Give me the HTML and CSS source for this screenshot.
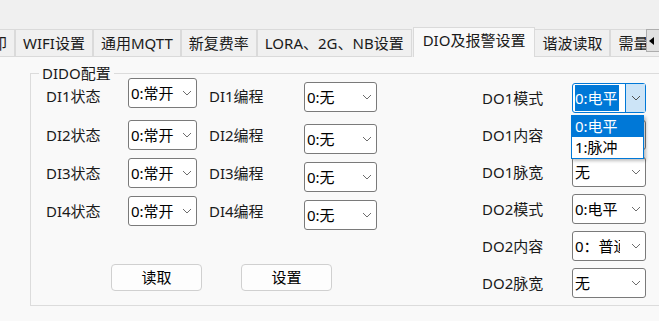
FILE: index.html
```html
<!DOCTYPE html>
<html lang="zh-CN">
<head>
    <meta charset="UTF-8">
    <title>DIO及报警设置</title>
    <link rel="stylesheet" href="styles.css">
</head>
<body>
<div class="tabs">
    <div class="tab">打印</div>
    <div class="tab">WIFI设置</div>
    <div class="tab">通用MQTT</div>
    <div class="tab">新复费率</div>
    <div class="tab">LORA、2G、NB设置</div>
    <div class="tab on">DIO及报警设置</div>
    <div class="tab">谐波读取</div>
    <div class="tab">需量设置</div>
    <div class="scroll"><i></i></div>
</div>
<div class="panel">
    <fieldset class="group">
        <legend>DIDO配置</legend>
        <div class="group-body">
            <!--左边：DI状态和编程-->
            <div class="left">
                <div class="di-grid">
                    <div class="lbl first">DI1状态</div>
                    <div class="combo w69"><span class="val">0:常开</span><span class="arrow"><svg width="10" height="6"><path d="M1 1 L5 5 L9 1"/></svg></span></div>
                    <div class="lbl lbl2 first">DI1编程</div>
                    <div class="combo w73 low"><span class="val">0:无</span><span class="arrow"><svg width="10" height="6"><path d="M1 1 L5 5 L9 1"/></svg></span></div>

                    <div class="lbl">DI2状态</div>
                    <div class="combo w69"><span class="val">0:常开</span><span class="arrow"><svg width="10" height="6"><path d="M1 1 L5 5 L9 1"/></svg></span></div>
                    <div class="lbl lbl2">DI2编程</div>
                    <div class="combo w73 low"><span class="val">0:无</span><span class="arrow"><svg width="10" height="6"><path d="M1 1 L5 5 L9 1"/></svg></span></div>

                    <div class="lbl">DI3状态</div>
                    <div class="combo w69"><span class="val">0:常开</span><span class="arrow"><svg width="10" height="6"><path d="M1 1 L5 5 L9 1"/></svg></span></div>
                    <div class="lbl lbl2">DI3编程</div>
                    <div class="combo w73 low"><span class="val">0:无</span><span class="arrow"><svg width="10" height="6"><path d="M1 1 L5 5 L9 1"/></svg></span></div>

                    <div class="lbl">DI4状态</div>
                    <div class="combo w69"><span class="val">0:常开</span><span class="arrow"><svg width="10" height="6"><path d="M1 1 L5 5 L9 1"/></svg></span></div>
                    <div class="lbl lbl2">DI4编程</div>
                    <div class="combo w73 low"><span class="val">0:无</span><span class="arrow"><svg width="10" height="6"><path d="M1 1 L5 5 L9 1"/></svg></span></div>
                </div>
                <div class="btns">
                    <button class="btn">读取</button>
                    <button class="btn">设置</button>
                </div>
            </div>
            <!--右边：DO设置-->
            <div class="right">
                <div class="lbl">DO1模式</div>
                <div class="combo w74 focus">
                    <span class="val"><span class="sel">0:电平</span></span>
                    <span class="arrow"><svg width="10" height="6"><path d="M1 1 L5 5 L9 1"/></svg></span>
                    <ul class="drop">
                        <li class="hot">0:电平</li>
                        <li>1:脉冲</li>
                    </ul>
                </div>
                <div class="lbl">DO1内容</div>
                <div class="combo w74"><span class="val">0：普通</span><span class="arrow"><svg width="10" height="6"><path d="M1 1 L5 5 L9 1"/></svg></span></div>
                <div class="lbl">DO1脉宽</div>
                <div class="combo w74"><span class="val">无</span><span class="arrow"><svg width="10" height="6"><path d="M1 1 L5 5 L9 1"/></svg></span></div>
                <div class="lbl">DO2模式</div>
                <div class="combo w74"><span class="val">0:电平</span><span class="arrow"><svg width="10" height="6"><path d="M1 1 L5 5 L9 1"/></svg></span></div>
                <div class="lbl">DO2内容</div>
                <div class="combo w74"><span class="val">0：普通</span><span class="arrow"><svg width="10" height="6"><path d="M1 1 L5 5 L9 1"/></svg></span></div>
                <div class="lbl">DO2脉宽</div>
                <div class="combo w74"><span class="val">无</span><span class="arrow"><svg width="10" height="6"><path d="M1 1 L5 5 L9 1"/></svg></span></div>
            </div>
        </div>
    </fieldset>
</div>
</body>
</html>
```

FILE: styles.css
```css
html,body{
    margin: 0;
    height: 100%;
    overflow: hidden;
}
body{
    background: #f0f0f0;
    font-family: "Noto Sans", "Noto Sans CJK SC", sans-serif;
    font-size: 15px;
    color: #1a1a1a;
}
/*顶部标签页*/
.tabs{
    display: flex;
    align-items: flex-end;
    height: 57px;
    margin-left: -31px;
    position: relative;
}
.tab{
    flex-shrink: 0;
    box-sizing: border-box;
    height: 28px;
    line-height: 26px;
    padding: 0 7px;
    border: 1px solid #dadada;
    background: #f0f0f0;
    white-space: nowrap;
}
.tab.on{
    height: 30px;
    line-height: 24px;
    padding: 0 9px 5px;
    margin: 0 -1px 0 1px;
    border-bottom: 0;
    background: #f9f9f9;
    position: relative;
    z-index: 1;
}
.scroll{
    position: absolute;
    right: -17px;
    top: 29px;
    width: 30px;
    height: 23px;
    box-sizing: border-box;
    border: 1px solid #adadad;
    background: #e1e1e1;
    display: flex;
    align-items: center;
    z-index: 2;
}
.scroll i{
    margin-left: 2px;
    border-right: 5px solid #000;
    border-top: 4px solid transparent;
    border-bottom: 4px solid transparent;
}
/*内容区*/
.panel{
    background: #f9f9f9;
    height: calc(100% - 57px);
    box-sizing: border-box;
    padding-top: 11px;
}
.group{
    margin: 0 0 0 30px;
    padding: 0;
    width: 700px;
    min-width: 0;
    border: 1px solid #dcdcdc;
}
.group legend{
    margin-left: 8px;
    padding: 0 3px;
    line-height: 10px;
}
.group-body{
    display: flex;
    align-items: flex-start;
}
.left{
    padding: 0 0 14px 15px;
}
.di-grid{
    display: grid;
    grid-template-columns: 82px 69px 107px 73px;
    grid-template-rows: 42px 38px 38px 34px;
    align-items: start;
}
.lbl{
    height: 30px;
    line-height: 30px;
    white-space: nowrap;
}
.lbl.first{
    margin-top: 3px;
}
.lbl2{
    padding-left: 12px;
}
.combo{
    position: relative;
    box-sizing: border-box;
    height: 30px;
    display: flex;
    align-items: center;
    border: 1px solid #7a7a7a;
    border-radius: 3px;
    background: #fff;
    color: #000;
}
.w69{ width: 69px; }
.w73{ width: 73px; }
.w74{ width: 74px; }
.combo.low{
    margin-top: 4px;
}
.combo .val{
    flex: 1;
    min-width: 0;
    margin: 0 6px 0 2px;
    overflow: hidden;
    white-space: nowrap;
    line-height: 26px;
}
.w69 .val{
    margin-right: 1px;
}
.combo .arrow{
    width: 19px;
    align-self: stretch;
    display: flex;
    align-items: center;
    justify-content: center;
}
.combo .arrow svg path{
    fill: none;
    stroke: #6d6d6d;
    stroke-width: 1;
}
/*获得焦点的下拉框*/
.combo.focus{
    border-color: #0078d7;
}
.combo.focus .val{
    margin-top: 1px;
    margin-bottom: 1px;
}
.combo.focus .sel{
    display: block;
    background: #0078d7;
    color: #fff;
}
.combo.focus .arrow{
    background: #cce4f7;
    border-left: 1px solid #0078d7;
}
.combo.focus .arrow svg path{
    stroke: #505050;
}
.drop{
    position: absolute;
    left: -2px;
    top: 31px;
    width: 73px;
    box-sizing: border-box;
    margin: 0;
    padding: 0;
    list-style: none;
    border: 1px solid #0078d7;
    background: #fff;
    box-shadow: 2px 2px 3px rgba(0,0,0,.25);
    z-index: 3;
}
.drop li{
    height: 21px;
    line-height: 21px;
    padding-left: 3px;
}
.drop li.hot{
    background: #0078d7;
    color: #fff;
}
.btns{
    display: flex;
    gap: 39px;
    margin: 34px 0 0 65px;
}
.btn{
    width: 91px;
    height: 27px;
    padding: 0;
    border: 1px solid #d0d0d0;
    border-radius: 4px;
    background: #fdfdfd;
    font: inherit;
    color: #000;
    line-height: 25px;
}
.right{
    margin: 5px 0 0 105px;
    display: grid;
    grid-template-columns: 90px 74px;
    grid-auto-rows: 30px;
    row-gap: 7px;
}
```
